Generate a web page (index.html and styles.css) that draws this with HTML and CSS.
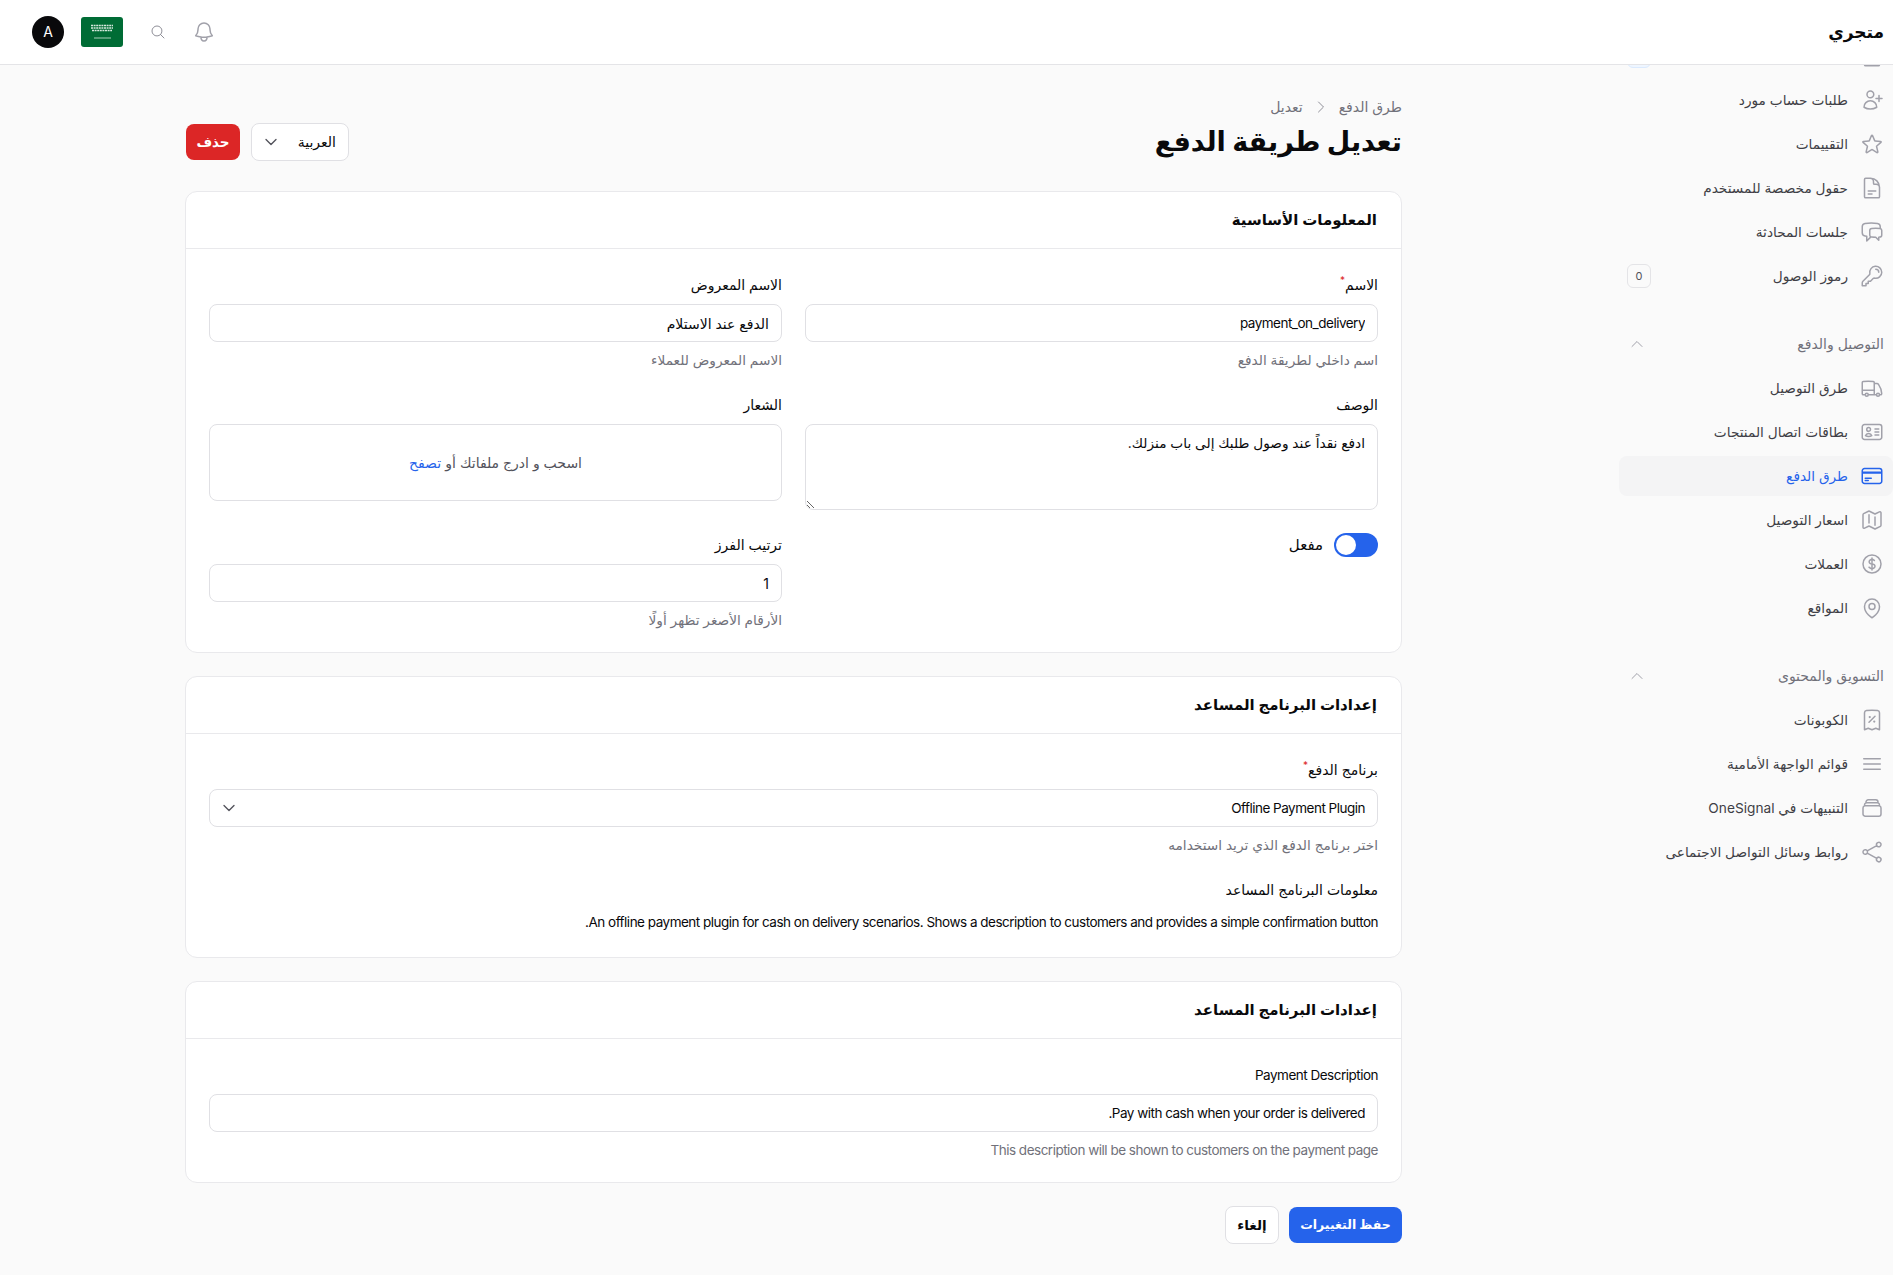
FILE: index.html
```html
<!DOCTYPE html>
<html lang="ar" dir="rtl">
<head>
<meta charset="utf-8">
<title>تعديل طريقة الدفع</title>
<link rel="stylesheet" href="styles.css">
</head>
<body>
<svg class="sprite" aria-hidden="true">
<symbol id="i-userplus" viewBox="0 0 24 24"><path d="M19 7.5v3m0 0v3m0-3h3m-3 0h-3m-2.25-4.125a3.375 3.375 0 11-6.75 0 3.375 3.375 0 016.75 0zM4 19.235v-.11a6.375 6.375 0 0112.75 0v.109A12.318 12.318 0 0110.374 21c-2.331 0-4.512-.645-6.374-1.766z"/></symbol>
<symbol id="i-star" viewBox="0 0 24 24"><path d="M11.48 3.499a.562.562 0 011.04 0l2.125 5.111a.563.563 0 00.475.345l5.518.442c.499.04.701.663.321.988l-4.204 3.602a.563.563 0 00-.182.557l1.285 5.385a.562.562 0 01-.84.61l-4.725-2.885a.563.563 0 00-.586 0L6.982 20.54a.562.562 0 01-.84-.61l1.285-5.386a.562.562 0 00-.182-.557l-4.204-3.602a.563.563 0 01.321-.988l5.518-.442a.563.563 0 00.475-.345L11.48 3.5z"/></symbol>
<symbol id="i-doc" viewBox="0 0 24 24"><path d="M19.5 14.25v-2.625a3.375 3.375 0 00-3.375-3.375h-1.5A1.125 1.125 0 0113.5 7.125v-1.5a3.375 3.375 0 00-3.375-3.375H8.25m0 12.75h7.5m-7.5 3H12M10.5 2.25H5.625c-.621 0-1.125.504-1.125 1.125v17.25c0 .621.504 1.125 1.125 1.125h12.75c.621 0 1.125-.504 1.125-1.125V11.25a9 9 0 00-9-9z"/></symbol>
<symbol id="i-chat" viewBox="0 0 24 24"><path d="M20.25 8.511c.884.284 1.5 1.128 1.5 2.097v4.286c0 1.136-.847 2.1-1.98 2.193-.34.027-.68.052-1.02.072v3.091l-3-3c-1.354 0-2.694-.055-4.02-.163a2.115 2.115 0 01-.825-.242m9.345-8.334a2.126 2.126 0 00-.476-.095 48.64 48.64 0 00-8.048 0c-1.131.094-1.976 1.057-1.976 2.192v4.286c0 .837.46 1.58 1.155 1.951m9.345-8.334V6.637c0-1.621-1.152-3.026-2.76-3.235A48.455 48.455 0 0011.25 3c-2.115 0-4.198.137-6.24.402-1.608.209-2.76 1.614-2.76 3.235v6.226c0 1.621 1.152 3.026 2.76 3.235.577.075 1.157.14 1.74.194V21l4.155-4.155"/></symbol>
<symbol id="i-key" viewBox="0 0 24 24"><path d="M15.75 5.25a3 3 0 013 3m3 0a6 6 0 01-7.029 5.912c-.563-.097-1.159.026-1.563.43L10.5 17.25H8.25v2.25H6v2.25H2.25v-2.818c0-.597.237-1.17.659-1.591l6.499-6.499c.404-.404.527-1 .43-1.563A6 6 0 1121.75 8.25z"/></symbol>
<symbol id="i-truck" viewBox="0 0 24 24"><path d="M8.25 18.75a1.5 1.5 0 01-3 0m3 0a1.5 1.5 0 00-3 0m3 0h6m-9 0H3.375a1.125 1.125 0 01-1.125-1.125V14.25m17.25 4.5a1.5 1.5 0 01-3 0m3 0a1.5 1.5 0 00-3 0m3 0h1.125c.621 0 1.129-.504 1.09-1.124a17.902 17.902 0 00-3.213-9.193 2.056 2.056 0 00-1.58-.86H14.25M16.5 18.75h-2.25m0-11.177v-.958c0-.568-.422-1.048-.987-1.106a48.554 48.554 0 00-10.026 0 1.106 1.106 0 00-.987 1.106v7.635m12-6.677v6.677m0 4.5v-4.5m0 0h-12"/></symbol>
<symbol id="i-id" viewBox="0 0 24 24"><path d="M15 9h3.75M15 12h3.75M15 15h3.75M4.5 19.5h15a2.25 2.25 0 002.25-2.25V6.75A2.25 2.25 0 0019.5 4.5h-15a2.25 2.25 0 00-2.25 2.25v10.5A2.25 2.25 0 004.5 19.5zm6-10.125a1.875 1.875 0 11-3.75 0 1.875 1.875 0 013.75 0zm1.294 6.336a6.721 6.721 0 01-3.17.789 6.721 6.721 0 01-3.168-.789 3.376 3.376 0 016.338 0z"/></symbol>
<symbol id="i-card" viewBox="0 0 24 24"><path d="M2.25 8.25h19.5M2.25 9h19.5m-16.5 5.25h6m-6 2.25h3m-3.75 3h15a2.25 2.25 0 002.25-2.25V6.75A2.25 2.25 0 0019.5 4.5h-15a2.25 2.25 0 00-2.25 2.25v10.5A2.25 2.25 0 004.5 19.5z"/></symbol>
<symbol id="i-map" viewBox="0 0 24 24"><path d="M9 6.75V15m6-6v8.25m.503 3.498l4.875-2.437c.381-.19.622-.58.622-1.006V4.82c0-.836-.88-1.38-1.628-1.006l-3.869 1.934c-.317.159-.69.159-1.006 0L9.503 3.252a1.125 1.125 0 00-1.006 0L3.622 5.689C3.24 5.88 3 6.27 3 6.695V19.18c0 .836.88 1.38 1.628 1.006l3.869-1.934c.317-.159.69-.159 1.006 0l4.994 2.497c.317.158.69.158 1.006 0z"/></symbol>
<symbol id="i-dollar" viewBox="0 0 24 24"><path d="M12 6v12m-3-2.818l.879.659c1.171.879 3.07.879 4.242 0 1.172-.879 1.172-2.303 0-3.182C13.536 12.219 12.768 12 12 12c-.725 0-1.45-.22-2.003-.659-1.106-.879-1.106-2.303 0-3.182s2.9-.879 4.006 0l.415.33M21 12a9 9 0 11-18 0 9 9 0 0118 0z"/></symbol>
<symbol id="i-pin" viewBox="0 0 24 24"><path d="M15 10.5a3 3 0 11-6 0 3 3 0 016 0z"/><path d="M19.5 10.5c0 7.142-7.5 11.25-7.5 11.25S4.5 17.642 4.5 10.5a7.5 7.5 0 1115 0z"/></symbol>
<symbol id="i-receipt" viewBox="0 0 24 24"><path d="M9 14.25l6-6m4.5-3.493V21.75l-3.75-1.5-3.75 1.5-3.75-1.5-3.75 1.5V4.757c0-1.108.806-2.057 1.907-2.185a48.507 48.507 0 0111.186 0c1.1.128 1.907 1.077 1.907 2.185zM9.75 9h.008v.008H9.75V9zm.375 0a.375.375 0 11-.75 0 .375.375 0 01.75 0zm4.125 4.5h.008v.008h-.008V13.5zm.375 0a.375.375 0 11-.75 0 .375.375 0 01.75 0z"/></symbol>
<symbol id="i-bars" viewBox="0 0 24 24"><path d="M3.75 6.75h16.5M3.75 12h16.5m-16.5 5.25h16.5"/></symbol>
<symbol id="i-stack" viewBox="0 0 24 24"><path d="M6 6.878V6a2.25 2.25 0 012.25-2.25h7.5A2.25 2.25 0 0118 6v.878m-12 0c.235-.083.487-.128.75-.128h10.5c.263 0 .515.045.75.128m-12 0A2.25 2.25 0 004.5 9v.878m13.5-3A2.25 2.25 0 0119.5 9v.878m0 0a2.246 2.246 0 00-.75-.128H5.25c-.263 0-.515.045-.75.128m15 0A2.25 2.25 0 0121 12v6a2.25 2.25 0 01-2.25 2.25H5.25A2.25 2.25 0 013 18v-6c0-.98.626-1.813 1.5-2.122"/></symbol>
<symbol id="i-share" viewBox="0 0 24 24"><path d="M7.217 10.907a2.25 2.25 0 100 2.186m0-2.186c.18.324.283.696.283 1.093s-.103.77-.283 1.093m0-2.186l9.566-5.314m-9.566 7.5l9.566 5.314m0 0a2.25 2.25 0 103.935 2.186 2.25 2.25 0 00-3.935-2.186zm0-12.814a2.25 2.25 0 103.933-2.185 2.25 2.25 0 00-3.933 2.185z"/></symbol>
<symbol id="i-bell" viewBox="0 0 24 24"><path d="M14.857 17.082a23.848 23.848 0 005.454-1.31A8.967 8.967 0 0118 9.75v-.7V9A6 6 0 006 9v.75a8.967 8.967 0 01-2.312 6.022c1.733.64 3.56 1.085 5.455 1.31m5.714 0a24.255 24.255 0 01-5.714 0m5.714 0a3 3 0 11-5.714 0"/></symbol>
<symbol id="i-search" viewBox="0 0 24 24"><path d="M21 21l-5.197-5.197m0 0A7.5 7.5 0 105.196 5.196a7.5 7.5 0 0010.607 10.607z"/></symbol>
<symbol id="i-down" viewBox="0 0 24 24"><path d="M19.5 8.25l-7.5 7.5-7.5-7.5"/></symbol>
<symbol id="i-up" viewBox="0 0 24 24"><path d="M4.5 15.75l7.5-7.5 7.5 7.5"/></symbol>
<symbol id="i-right" viewBox="0 0 24 24"><path d="M8.25 4.5l7.5 7.5-7.5 7.5"/></symbol>
</svg>

<header class="topbar">
  <div class="brand">متجري</div>
  <div class="top-actions">
    <button class="icon-btn bell"><svg class="ic ic-bell"><use href="#i-bell"/></svg></button>
    <button class="icon-btn search"><svg class="ic ic-search"><use href="#i-search"/></svg></button>
    <svg class="flag" viewBox="0 0 42 30" aria-hidden="true">
      <rect width="42" height="30" rx="3" fill="#006c35"/>
      <path class="flag-script" d="M10 8.5h22M10 11h22M11 13.5h20"/>
      <path class="flag-sword" d="M13 21h17"/>
    </svg>
    <div class="avatar">A</div>
  </div>
</header>

<div class="shell">
  <aside class="sidebar">
    <nav class="nav">
      <a class="item"><svg class="ic item-ic"><use href="#i-doc"/></svg><span class="item-label"></span><span class="badge badge-blue"></span></a>
      <a class="item"><svg class="ic item-ic"><use href="#i-userplus"/></svg><span class="item-label">طلبات حساب مورد</span></a>
      <a class="item"><svg class="ic item-ic"><use href="#i-star"/></svg><span class="item-label">التقييمات</span></a>
      <a class="item"><svg class="ic item-ic"><use href="#i-doc"/></svg><span class="item-label">حقول مخصصة للمستخدم</span></a>
      <a class="item"><svg class="ic item-ic"><use href="#i-chat"/></svg><span class="item-label">جلسات المحادثة</span></a>
      <a class="item"><svg class="ic item-ic"><use href="#i-key"/></svg><span class="item-label">رموز الوصول</span><span class="badge">0</span></a>

      <div class="group"><span>التوصيل والدفع</span><svg class="ic ic-chev"><use href="#i-up"/></svg></div>
      <a class="item"><svg class="ic item-ic"><use href="#i-truck"/></svg><span class="item-label">طرق التوصيل</span></a>
      <a class="item"><svg class="ic item-ic"><use href="#i-id"/></svg><span class="item-label">بطاقات اتصال المنتجات</span></a>
      <a class="item active"><svg class="ic item-ic"><use href="#i-card"/></svg><span class="item-label">طرق الدفع</span></a>
      <a class="item"><svg class="ic item-ic"><use href="#i-map"/></svg><span class="item-label">اسعار التوصيل</span></a>
      <a class="item"><svg class="ic item-ic"><use href="#i-dollar"/></svg><span class="item-label">العملات</span></a>
      <a class="item"><svg class="ic item-ic"><use href="#i-pin"/></svg><span class="item-label">المواقع</span></a>

      <div class="group"><span>التسويق والمحتوى</span><svg class="ic ic-chev"><use href="#i-up"/></svg></div>
      <a class="item"><svg class="ic item-ic"><use href="#i-receipt"/></svg><span class="item-label">الكوبونات</span></a>
      <a class="item"><svg class="ic item-ic"><use href="#i-bars"/></svg><span class="item-label">قوائم الواجهة الأمامية</span></a>
      <a class="item"><svg class="ic item-ic"><use href="#i-stack"/></svg><span class="item-label">التنبيهات في OneSignal</span></a>
      <a class="item"><svg class="ic item-ic"><use href="#i-share"/></svg><span class="item-label">روابط وسائل التواصل الاجتماعى</span></a>
    </nav>
  </aside>

  <main class="main">
    <div class="page-head">
      <div>
        <div class="crumbs"><span>طرق الدفع</span><svg class="ic ic-crumb"><use href="#i-right"/></svg><span>تعديل</span></div>
        <h1 class="title">تعديل طريقة الدفع</h1>
      </div>
      <div class="head-actions">
        <div class="lang"><span>العربية</span><svg class="ic ic-sel"><use href="#i-down"/></svg></div>
        <button class="btn btn-danger">حذف</button>
      </div>
    </div>

    <section class="card">
      <h2 class="card-head">المعلومات الأساسية</h2>
      <div class="card-body grid-2">
        <div class="field">
          <label class="label">الاسم<sup class="req">*</sup></label>
          <input class="input latin" value="payment_on_delivery">
          <p class="hint">اسم داخلي لطريقة الدفع</p>
        </div>
        <div class="field">
          <label class="label">الاسم المعروض</label>
          <input class="input" value="الدفع عند الاستلام">
          <p class="hint">الاسم المعروض للعملاء</p>
        </div>
        <div class="field">
          <label class="label">الوصف</label>
          <textarea class="input textarea">ادفع نقداً عند وصول طلبك إلى باب منزلك.</textarea>
        </div>
        <div class="field">
          <label class="label">الشعار</label>
          <div class="drop">اسحب و ادرج ملفاتك أو <span class="link">تصفح</span></div>
        </div>
        <div class="field">
          <div class="toggle-row"><span class="toggle"><span class="knob"></span></span><span class="toggle-label">مفعل</span></div>
        </div>
        <div class="field">
          <label class="label">ترتيب الفرز</label>
          <input class="input" value="1">
          <p class="hint">الأرقام الأصغر تظهر أولًا</p>
        </div>
      </div>
    </section>

    <section class="card">
      <h2 class="card-head">إعدادات البرنامج المساعد</h2>
      <div class="card-body stack">
        <div class="field">
          <label class="label">برنامج الدفع<sup class="req">*</sup></label>
          <div class="input select"><span class="latin">Offline Payment Plugin</span><svg class="ic ic-sel"><use href="#i-down"/></svg></div>
          <p class="hint">اختر برنامج الدفع الذي تريد استخدامه</p>
        </div>
        <div class="field">
          <label class="label">معلومات البرنامج المساعد</label>
          <p class="plain latin">An offline payment plugin for cash on delivery scenarios. Shows a description to customers and provides a simple confirmation button.</p>
        </div>
      </div>
    </section>

    <section class="card">
      <h2 class="card-head">إعدادات البرنامج المساعد</h2>
      <div class="card-body stack">
        <div class="field">
          <label class="label latin">Payment Description</label>
          <input class="input latin" value="Pay with cash when your order is delivered.">
          <p class="hint latin">This description will be shown to customers on the payment page</p>
        </div>
      </div>
    </section>

    <div class="form-actions">
      <button class="btn btn-primary">حفظ التغييرات</button>
      <button class="btn btn-light">إلغاء</button>
    </div>
  </main>
</div>
</body>
</html>
```

FILE: styles.css
```css
* { box-sizing: border-box; }
html, body { margin: 0; padding: 0; height: 100%; }
body {
  font-family: Inter, "DejaVu Sans", "Noto Sans", sans-serif;
  font-size: 14px;
  line-height: 20px;
  color: #09090b;
  background: #fafafa;
  overflow: hidden;
}
.sprite { display: none; }
.ic { fill: none; stroke: currentColor; stroke-width: 1.5; stroke-linecap: round; stroke-linejoin: round; display: block; flex: none; }

.topbar {
  height: 65px;
  background: #fff;
  border-bottom: 1px solid #e4e4e7;
  display: flex;
  align-items: center;
  justify-content: space-between;
  padding: 0 9px 1px 32px;
  position: relative;
  z-index: 2;
}
.brand { font-size: 17px; line-height: 28px; font-weight: 700; color: #09090b; }
.top-actions { display: flex; align-items: center; }
.icon-btn { border: 0; background: none; padding: 0; display: flex; color: #a1a1aa; }
.ic-bell { width: 24px; height: 24px; }
.ic-search { width: 16px; height: 16px; color: #8f8f98; }
.bell { margin-left: 26px; }
.search { margin-left: 27px; }
.flag { width: 42px; height: 30px; display: block; margin-left: 17px; }
.flag-script { stroke: #d6e8dd; stroke-width: 1.4; stroke-dasharray: 2 .6; fill: none; }
.flag-sword { stroke: #d6e8dd; stroke-width: .8; fill: none; }
.avatar {
  width: 32px; height: 32px; border-radius: 50%;
  background: #09090b; color: #fff;
  display: flex; align-items: center; justify-content: center;
  font-size: 14px;
}

.shell { display: flex; height: 1210px; }
.sidebar { width: 274px; flex: none; overflow: hidden; }
.nav { margin-top: -29px; display: flex; flex-direction: column; gap: 4px; }
.item {
  height: 40px;
  display: flex; align-items: center;
  padding: 0 9px 0 8px;
  gap: 12px;
  border-radius: 8px;
  color: #3f3f46;
  font-size: 13.7px;
}
.item-ic { width: 24px; height: 24px; color: #a1a1aa; }
.item-label { flex: 1; }
.badge {
  width: 24px; height: 24px; border: 1px solid #e4e4e7; border-radius: 6px;
  font-size: 11px; display: flex; align-items: center; justify-content: center;
  color: #52525b;
}
.badge-blue { background: #eff6ff; border-color: #dbeafe; color: #2563eb; }
.active { background: #f4f4f5; color: #2563eb; }
.active .item-ic { color: #2563eb; }
.group {
  height: 40px;
  margin-top: 24px;
  display: flex; align-items: center; justify-content: space-between;
  padding: 0 9px 0 10px;
  color: #71717a;
  font-size: 14px;
}
.ic-chev { width: 16px; height: 16px; color: #a1a1aa; }

.main { flex: 1; padding: 32px 217px 0 185px; min-width: 0; }
.page-head { display: flex; justify-content: space-between; align-items: flex-end; margin-bottom: 31px; }
.crumbs { display: flex; align-items: center; gap: 10px; color: #71717a; font-size: 14px; margin-bottom: 7px; }
.ic-crumb { width: 16px; height: 16px; color: #8f8f98; }
.title { margin: 0; font-size: 27px; line-height: 36px; font-weight: 700; color: #09090b; }
.head-actions { display: flex; align-items: center; gap: 11px; margin: 0 0 -1px; padding-left: 1px; }
.lang {
  width: 98px; height: 38px;
  background: #fff; border: 1px solid #e0e0e4; border-radius: 8px;
  display: flex; align-items: center; justify-content: space-between;
  padding: 0 12px 0 11px;
}
.ic-sel { width: 16px; height: 16px; color: #52525b; stroke-width: 2; }
.btn {
  font: inherit; font-size: 13.5px; font-weight: 600; height: 36px; border-radius: 8px; border: 0; padding: 0; cursor: pointer; white-space: nowrap;
}
.btn-danger { background: #dc2626; color: #fff; width: 54px; }
.btn-primary { background: #2563eb; color: #fff; width: 113px; font-size: 12.5px; }
.btn-light { background: #fff; border: 1px solid #e0e0e4; color: #09090b; width: 54px; height: 38px; }

.card { background: #fff; border: 1px solid #e9e9ec; border-radius: 12px; margin-bottom: 23px; }
.card-head {
  margin: 0; height: 57px; display: flex; align-items: center;
  padding: 0 24px; font-size: 15px; font-weight: 600;
  border-bottom: 1px solid #e9e9ec;
}
.card-body { padding: 25px 23px 22px; }
.grid-2 { display: grid; grid-template-columns: 1fr 1fr; gap: 24px 23px; }
.stack { display: flex; flex-direction: column; gap: 24px; }
.field { min-width: 0; }
.label { display: block; line-height: 22px; margin-bottom: 8px; font-size: 14px; color: #09090b; }
.req { color: #dc2626; font-size: 10px; line-height: 0; }
.input {
  display: block; width: 100%; height: 38px;
  font: inherit; font-size: 14px; color: #09090b;
  background: #fff; border: 1px solid #e0e0e4; border-radius: 8px;
  padding: 0 12px; outline: 0;
}
.textarea { height: 86px; padding: 8px 12px; resize: vertical; font-size: 13.7px; }
.select { display: flex; align-items: center; justify-content: space-between; padding-left: 11px; }
.hint { margin: 8px 0 0; color: #71717a; font-size: 13.7px; line-height: 20px; }
.plain { margin: 11px 0 3px; line-height: 20px; color: #09090b; }
.label.latin, .input.latin, .hint.latin, .plain.latin, .select .latin { font-size: 13.5px; letter-spacing: -.5px; }
.drop {
  height: 77px; border: 1px solid #e0e0e4; border-radius: 8px; background: #fff;
  display: flex; align-items: center; justify-content: center; gap: .3em;
  color: #52525b;
}
.link { color: #2563eb; }
.toggle-row { display: flex; align-items: center; gap: 11px; height: 22px; }
.toggle { width: 44px; height: 24px; border-radius: 12px; background: #2563eb; display: flex; align-items: center; justify-content: flex-end; padding: 0 2px; }
.knob { width: 20px; height: 20px; border-radius: 50%; background: #fff; }
.toggle-label { color: #09090b; font-size: 15px; }
.form-actions { display: flex; gap: 10px; align-items: center; margin-top: 23px; }
```
